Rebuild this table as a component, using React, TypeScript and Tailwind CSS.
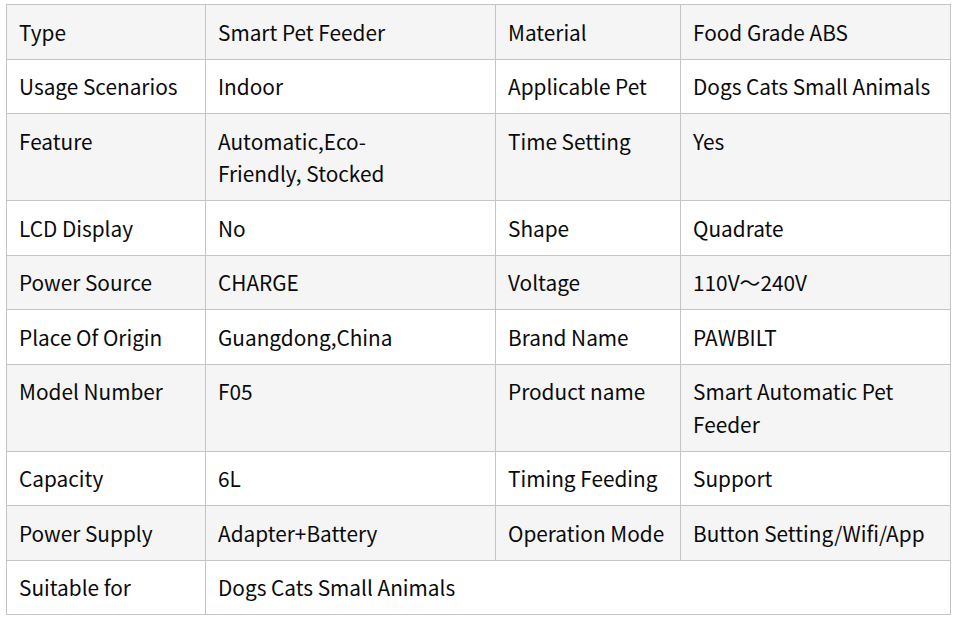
import type { ReactNode } from 'react'

const rows: [string, ReactNode, string, string][] = [
  ['Type', 'Smart Pet Feeder', 'Material', 'Food Grade ABS'],
  ['Usage Scenarios', 'Indoor', 'Applicable Pet', 'Dogs Cats Small Animals'],
  ['Feature', <>Automatic,Eco-<br />Friendly, Stocked</>, 'Time Setting', 'Yes'],
  ['LCD Display', 'No', 'Shape', 'Quadrate'],
  ['Power Source', 'CHARGE', 'Voltage', '110V～240V'],
  ['Place Of Origin', 'Guangdong,China', 'Brand Name', 'PAWBILT'],
  ['Model Number', 'F05', 'Product name', 'Smart Automatic Pet Feeder'],
  ['Capacity', '6L', 'Timing Feeding', 'Support'],
  ['Power Supply', 'Adapter+Battery', 'Operation Mode', 'Button Setting/Wifi/App'],
]

const cell = 'border border-[#c4c4c4] px-3 py-[10.5px] align-top text-left font-normal'

export default function App() {
  return (
    <div className="min-h-screen bg-white pt-[4px] pl-[6px] font-['Noto_Sans_CJK_SC','Noto_Sans',sans-serif] text-[20.8px] leading-[32.5px] text-[#0a0a0a]">
      <table className="w-[945px] table-fixed border-collapse">
        <colgroup>
          <col className="w-[199px]" />
          <col className="w-[290px]" />
          <col className="w-[185px]" />
          <col className="w-[270px]" />
        </colgroup>
        <tbody>
          {rows.map((r, i) => (
            <tr key={r[0]} className={i % 2 === 0 ? 'bg-[#f5f5f5]' : 'bg-white'}>
              {r.map((c, j) => (
                <td key={j} className={cell}>{c}</td>
              ))}
            </tr>
          ))}
          {/* last row spans the remaining columns */}
          <tr className="bg-white">
            <td className={cell}>Suitable for</td>
            <td className={cell} colSpan={3}>Dogs Cats Small Animals</td>
          </tr>
        </tbody>
      </table>
    </div>
  )
}
